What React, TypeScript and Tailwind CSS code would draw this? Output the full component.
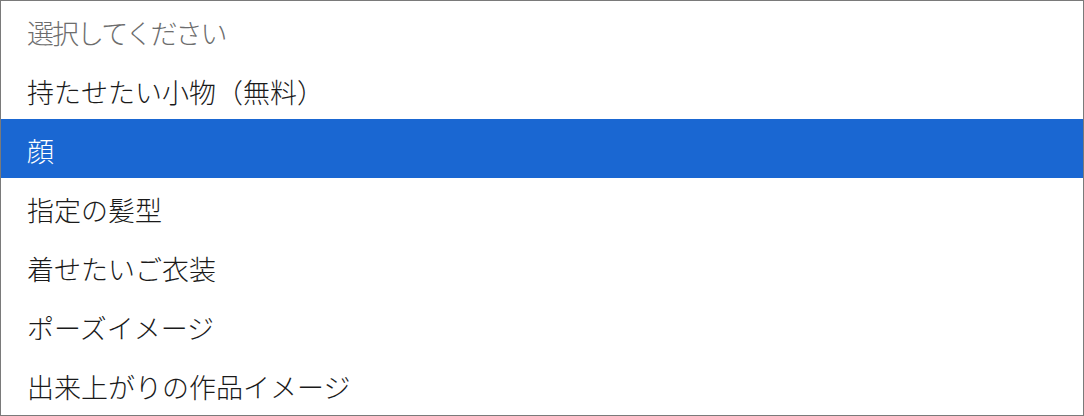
const OPTIONS = [
  '持たせたい小物（無料）',
  '顔',
  '指定の髪型',
  '着せたいご衣装',
  'ポーズイメージ',
  '出来上がりの作品イメージ',
];

const SELECTED = 1;

export default function App() {
  return (
    <div className="w-[1084px] h-[416px] bg-white">
      <div
        className="h-full border border-[#7a7a7a] bg-white flex flex-col text-[27px] leading-none font-light"
        style={{ fontFamily: '"Noto Sans CJK JP", "Noto Sans", sans-serif' }}
      >
        <div className="h-[59px] flex items-center pl-[26px] pt-[3px] tracking-[-2px] text-[#6d6d6d]">
          選択してください
        </div>
        {OPTIONS.map((label, i) => {
          const active = i === SELECTED;
          return (
            <div
              key={label}
              className={
                active
                  ? 'h-[59px] flex items-center pl-[26px] pt-[3px] bg-[#1a67d2] text-white'
                  : 'h-[59px] flex items-center pl-[26px] pt-[3px] text-[#1a1a1a]'
              }
            >
              {label}
            </div>
          );
        })}
      </div>
    </div>
  );
}
